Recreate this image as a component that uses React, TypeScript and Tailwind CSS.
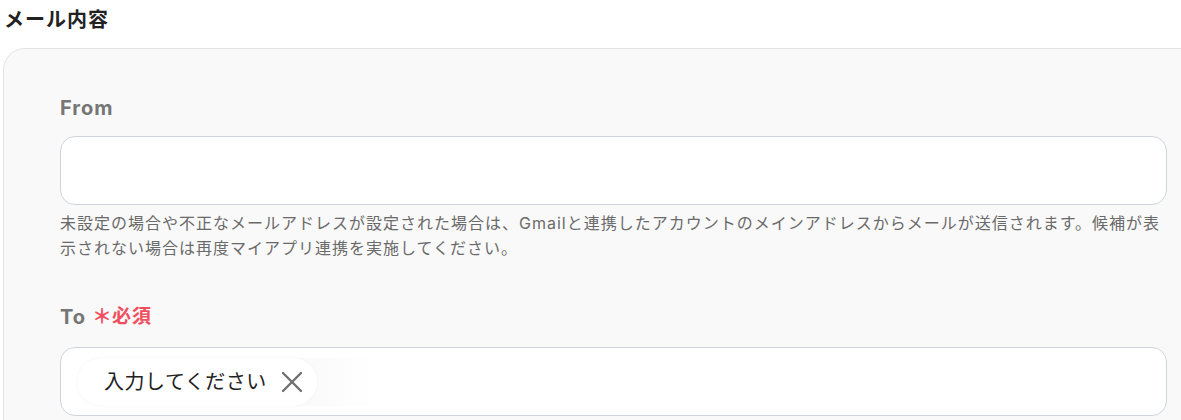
import { X } from "lucide-react";

const FONT = { fontFamily: 'Inter, "Noto Sans CJK JP", sans-serif' };

export default function App() {
  return (
    <div className="h-[420px] w-[1181px] overflow-hidden bg-white" style={FONT}>
      <h2 className="pl-[4px] pt-[5px] text-[20px] font-bold leading-[30px] tracking-[1px] text-[#222]">
        メール内容
      </h2>

      <div className="ml-[3px] mt-[13px] w-[1260px] rounded-tl-[22px] border border-[#e3e3e3] bg-[#f9f9f9] pl-[56px] pt-[45px]">
        <label className="block text-[20px] font-bold leading-[28px] tracking-[1px] text-[#767676]">From</label>
        <div className="mt-[14px] h-[69px] w-[1107px] rounded-[15px] border border-[#cfd3da] bg-white" />
        <p className="mt-[6px] w-[1108px] text-[16px] leading-[25px] tracking-[1px] text-[#6a6a6a]">
          未設定の場合や不正なメールアドレスが設定された場合は、Gmailと連携したアカウントのメインアドレスからメールが送信されます。候補が表示されない場合は再度マイアプリ連携を実施してください。
        </p>

        <label className="mt-[42px] flex items-center gap-[6px] text-[20px] font-bold leading-[28px]">
          <span className="tracking-[1px] text-[#767676]">To</span>
          <span className="flex items-center text-[#f04e5e]">
            <span className="font-semibold">＊</span>
            <span className="text-[19px] tracking-[1px]">必須</span>
          </span>
        </label>
        <div className="mt-[16px] flex h-[69px] w-[1107px] items-center rounded-[15px] border border-[#cfd3da] bg-white pl-[16px]">
          <div className="flex h-[48px] w-[300px] items-center rounded-l-[24px] bg-gradient-to-r from-[#f1f1f1] via-[#f4f4f4] to-white">
            <div className="flex h-[48px] items-center gap-[7px] rounded-full bg-white pl-[27px] pr-[7px] shadow-[0_0_3px_rgba(0,0,0,0.04)]">
              <span className="text-[20px] leading-[28px] tracking-[0.5px] text-[#222]">入力してください</span>
              <X className="h-[36px] w-[36px] text-[#707070]" strokeWidth={1.6} />
            </div>
          </div>
        </div>
        <div className="h-[40px]" />
      </div>
    </div>
  );
}
